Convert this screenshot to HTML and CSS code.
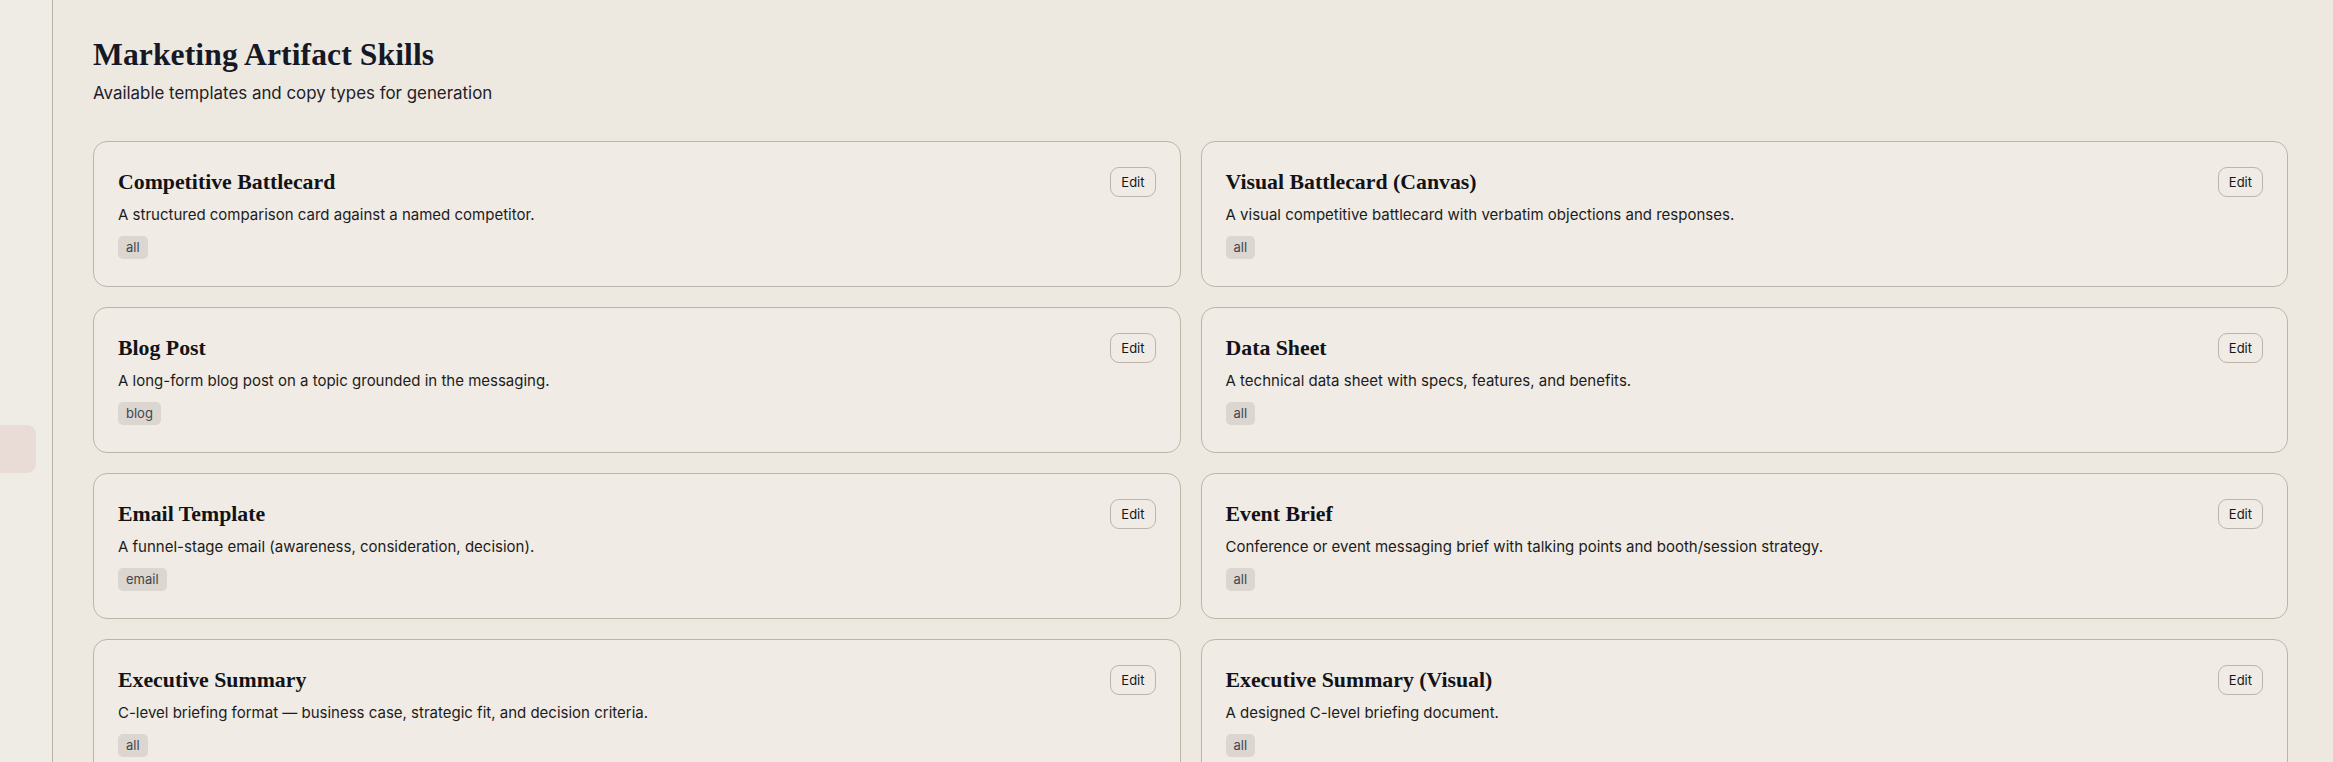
FILE: index.html
```html
<!DOCTYPE html>
<html lang="en">
<head>
<meta charset="utf-8">
<title>Marketing Artifact Skills</title>
<link rel="stylesheet" href="styles.css">
</head>
<body>
<div class="app">
  <aside class="sidebar">
    <div class="side-item"></div>
  </aside>
  <main class="main">
    <h1 class="page-title">Marketing Artifact Skills</h1>
    <p class="page-sub">Available templates and copy types for generation</p>
    <div class="grid">
      <div class="card">
        <div class="card-head"><h2 class="card-title">Competitive Battlecard</h2><button class="edit">Edit</button></div>
        <p class="card-desc">A structured comparison card against a named competitor.</p>
        <span class="tag">all</span>
      </div>
      <div class="card">
        <div class="card-head"><h2 class="card-title">Visual Battlecard (Canvas)</h2><button class="edit">Edit</button></div>
        <p class="card-desc">A visual competitive battlecard with verbatim objections and responses.</p>
        <span class="tag">all</span>
      </div>
      <div class="card">
        <div class="card-head"><h2 class="card-title">Blog Post</h2><button class="edit">Edit</button></div>
        <p class="card-desc">A long-form blog post on a topic grounded in the messaging.</p>
        <span class="tag">blog</span>
      </div>
      <div class="card">
        <div class="card-head"><h2 class="card-title">Data Sheet</h2><button class="edit">Edit</button></div>
        <p class="card-desc">A technical data sheet with specs, features, and benefits.</p>
        <span class="tag">all</span>
      </div>
      <div class="card">
        <div class="card-head"><h2 class="card-title">Email Template</h2><button class="edit">Edit</button></div>
        <p class="card-desc">A funnel-stage email (awareness, consideration, decision).</p>
        <span class="tag">email</span>
      </div>
      <div class="card">
        <div class="card-head"><h2 class="card-title">Event Brief</h2><button class="edit">Edit</button></div>
        <p class="card-desc">Conference or event messaging brief with talking points and booth/session strategy.</p>
        <span class="tag">all</span>
      </div>
      <div class="card">
        <div class="card-head"><h2 class="card-title">Executive Summary</h2><button class="edit">Edit</button></div>
        <p class="card-desc">C-level briefing format — business case, strategic fit, and decision criteria.</p>
        <span class="tag">all</span>
      </div>
      <div class="card">
        <div class="card-head"><h2 class="card-title">Executive Summary (Visual)</h2><button class="edit">Edit</button></div>
        <p class="card-desc">A designed C-level briefing document.</p>
        <span class="tag">all</span>
      </div>
    </div>
  </main>
</div>
</body>
</html>
```
FILE: styles.css
```css
* { box-sizing: border-box; }
html, body { margin: 0; padding: 0; height: 100%; overflow: hidden; }
body {
  background: #ede9e1;
  font-family: Inter, "Noto Sans", sans-serif;
  color: #1c1d22;
}
.app { display: flex; min-height: 100%; }
.sidebar {
  width: 53px;
  flex: 0 0 53px;
  background: #efebe5;
  border-right: 1px solid #b9b2a6;
  padding-top: 425px;
}
.side-item {
  width: 36px;
  height: 48px;
  background: #e9dcd6;
  border-radius: 0 9px 9px 0;
}
.main {
  flex: 1;
  padding: 37px 45px 40px 40px;
}
.page-title {
  margin: 0;
  font-family: "Liberation Serif", "Times New Roman", serif;
  font-weight: 700;
  font-size: 31.6px;
  line-height: 36px;
  color: #151925;
  letter-spacing: 0.1px;
}
.page-sub {
  margin: 8px 0 0;
  font-size: 16.9px;
  line-height: 24px;
  color: #1e2027;
}
.grid {
  margin-top: 36px;
  display: grid;
  grid-template-columns: 1fr 1fr;
  gap: 20px;
}
.card {
  background: #f0ebe4;
  border: 1px solid #bdb5a9;
  border-radius: 14px;
  padding: 24px;
  height: 146px;
}
.card-head {
  display: flex;
  align-items: center;
  justify-content: space-between;
  height: 30px;
}
.card-title {
  margin: 2px 0 0;
  font-family: "Liberation Serif", "Times New Roman", serif;
  font-weight: 700;
  font-size: 21.8px;
  line-height: 26px;
  color: #121317;
}
.edit {
  margin-top: 1px;
  font-family: Inter, sans-serif;
  font-size: 13px;
  line-height: 20px;
  padding: 4px 10px;
  border: 1px solid #bdb5a9;
  border-radius: 9px;
  background: #f0ebe4;
  color: #16171b;
}
.card-desc {
  margin: 8px 0 11px;
  font-size: 15px;
  line-height: 21px;
  color: #1b1c21;
}
.tag {
  display: inline-block;
  font-size: 13px;
  line-height: 17px;
  padding: 3px 8px;
  border-radius: 5px;
  background: #dbd6cf;
  color: #43454d;
}
```
